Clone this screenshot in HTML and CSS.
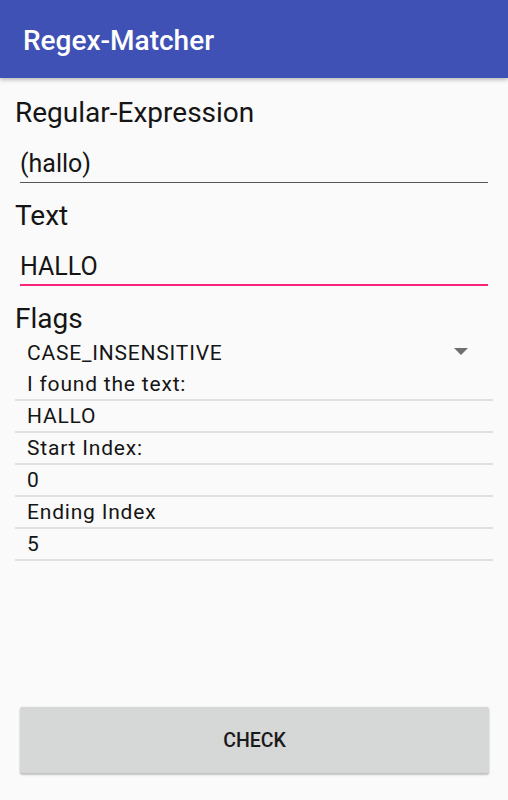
FILE: index.html
```html
<!DOCTYPE html>
<html>
<head>
<meta charset="utf-8">
<link rel="stylesheet" href="styles.css">
</head>
<body>
<div class="screen">
  <header class="appbar"><span class="title">Regex-Matcher</span></header>
  <main class="content">
    <div class="label first">Regular-Expression</div>
    <div class="input plain">(hallo)</div>
    <div class="label">Text</div>
    <div class="input focused">HALLO</div>
    <div class="label">Flags</div>
    <div class="spinner"><span>CASE_INSENSITIVE</span><span class="arrow"></span></div>
    <div class="row">I found the text:</div>
    <div class="row">HALLO</div>
    <div class="row">Start Index:</div>
    <div class="row">0</div>
    <div class="row">Ending Index</div>
    <div class="row">5</div>
  </main>
  <div class="button">CHECK</div>
</div>
</body>
</html>
```
FILE: styles.css
```css
* { box-sizing: border-box; }
html, body { margin: 0; padding: 0; }
body { background: #fafafa; font-family: Roboto, "Noto Sans", sans-serif; color: #151515; }
.screen { height: 800px; display: flex; flex-direction: column; }
.appbar {
  height: 78px; background: #3f51b5; flex: none;
  display: flex; align-items: center; padding-left: 23px;
  box-shadow: 0 2px 4px rgba(0,0,0,0.25);
  position: relative; z-index: 1;
}
.title { color: #fff; font-size: 28px; font-weight: 500; margin-top: 2px; }
.content { padding: 0 15px; }
.label { font-size: 28px; line-height: 32px; margin-top: 17px; }
.label.first { margin-top: 19px; }
.input { margin: 20px 5px 0 5px; font-size: 25px; line-height: 30px; }
.input.plain { padding-bottom: 3px; border-bottom: 1px solid #555; }
.input.focused { padding-bottom: 2px; border-bottom: 2px solid #ff2279; }
.spinner {
  margin-top: 2px; height: 32px; line-height: 32px; font-size: 21px; letter-spacing: 0.8px;
  padding-left: 12px; padding-right: 25px;
  display: flex; justify-content: space-between; align-items: center;
}
.arrow {
  width: 0; height: 0;
  border-left: 7px solid transparent; border-right: 7px solid transparent;
  border-top: 7px solid #6f6f6f; margin-top: -4px;
}
.row {
  font-size: 21px; letter-spacing: 0.8px; line-height: 29px; padding-top: 1px; padding-left: 12px;
  border-bottom: 2px solid #e0e0e0;
}
.button {
  margin: auto 19px 27px 20px; height: 66px; flex: none;
  background: #d6d7d7; border-radius: 2px;
  box-shadow: 0 2px 2px rgba(0,0,0,0.22), 0 0 2px rgba(0,0,0,0.1);
  display: flex; align-items: center; justify-content: center;
  font-size: 19.5px; font-weight: 500; color: #1a1a1a;
}
```
